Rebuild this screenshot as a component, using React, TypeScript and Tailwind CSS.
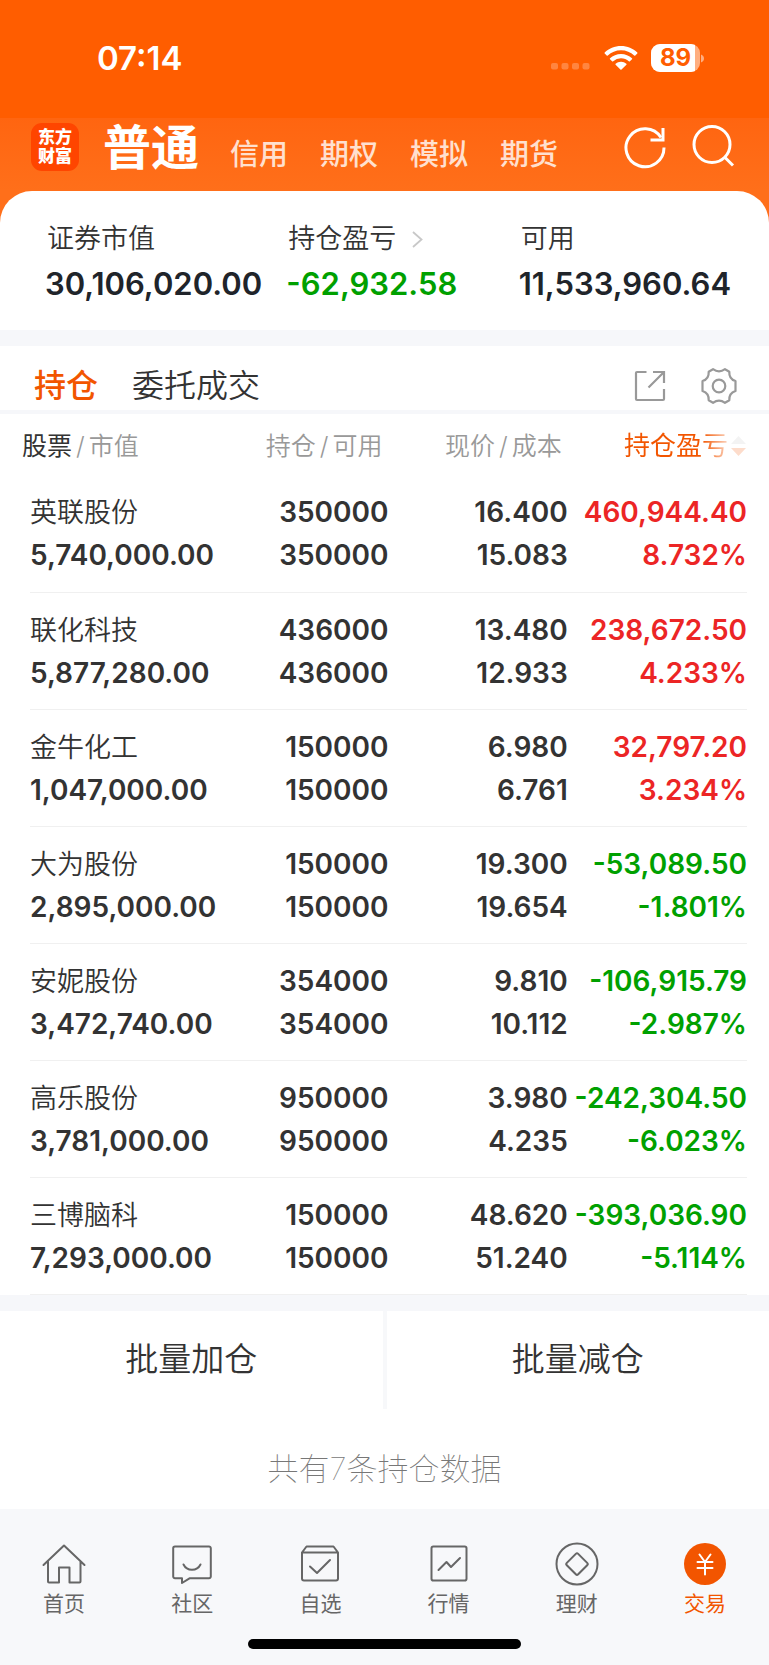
import type { ReactNode } from 'react';

const ACCOUNT_TABS = ['信用', '期权', '模拟', '期货'];

type Holding = {
  name: string;
  value: string;
  qty: string;
  price: string;
  cost: string;
  profit: string;
  rate: string;
};

const HOLDINGS: Holding[] = [
  { name: '英联股份', value: '5,740,000.00', qty: '350000', price: '16.400', cost: '15.083', profit: '460,944.40', rate: '8.732%' },
  { name: '联化科技', value: '5,877,280.00', qty: '436000', price: '13.480', cost: '12.933', profit: '238,672.50', rate: '4.233%' },
  { name: '金牛化工', value: '1,047,000.00', qty: '150000', price: '6.980', cost: '6.761', profit: '32,797.20', rate: '3.234%' },
  { name: '大为股份', value: '2,895,000.00', qty: '150000', price: '19.300', cost: '19.654', profit: '-53,089.50', rate: '-1.801%' },
  { name: '安妮股份', value: '3,472,740.00', qty: '354000', price: '9.810', cost: '10.112', profit: '-106,915.79', rate: '-2.987%' },
  { name: '高乐股份', value: '3,781,000.00', qty: '950000', price: '3.980', cost: '4.235', profit: '-242,304.50', rate: '-6.023%' },
  { name: '三博脑科', value: '7,293,000.00', qty: '150000', price: '48.620', cost: '51.240', profit: '-393,036.90', rate: '-5.114%' },
];

function StatusBar() {
  return (
    <div className="flex h-[118px] items-start justify-between bg-[#ff5d00] pl-[97px] pr-16 pt-9">
      <span className="text-[33px] font-semibold leading-[44px]">07:14</span>
      <div className="flex h-[44px] items-center">
        <svg width="39" height="7" viewBox="0 0 39 7" fill="#fff" fillOpacity="0.25" className="mr-[14px] mt-4">
          <rect x="0" width="7" height="6.5" rx="2" />
          <rect x="10.5" width="7" height="6.5" rx="2" />
          <rect x="21" width="7" height="6.5" rx="2" />
          <rect x="31.5" width="7" height="6.5" rx="2" />
        </svg>
        <svg width="34" height="26" viewBox="0 0 34 26" className="mr-[13px]" fill="#fff">
          <path d="M17 1C10.600 1 4.900 3.500.7 7.500a.8.8 0 0 0 0 1.100l2 2c.3.3.8.3 1.100 0C7.300 7.300 11.900 5.300 17 5.300s9.700 2 13.200 5.300c.3.3.8.3 1.100 0l2-2c.3-.3.3-.8 0-1.100C29.100 3.500 23.400 1 17 1Z" />
          <path d="M17 8.900c-4.300 0-8.100 1.600-11 4.300-.3.3-.3.8 0 1.100l2.100 2c.3.3.8.3 1.100 0A11.300 11.300 0 0 1 17 13.200c3 0 5.700 1.200 7.800 3.100.3.3.8.3 1.100 0l2.100-2c.3-.3.3-.8 0-1.100-2.900-2.700-6.700-4.300-11-4.300Z" />
          <path d="M17 16.800c-2.100 0-4 .7-5.400 2-.3.3-.3.7 0 1l4.800 4.800c.3.3.8.3 1.100 0l4.900-4.800c.3-.3.3-.7 0-1a8 8 0 0 0-5.400-2Z" />
        </svg>
        <div className="relative h-7 w-[49px] overflow-hidden rounded-[9px] bg-white/50">
          <div className="h-7 w-11 bg-white" />
          <span className="absolute inset-0 text-center text-[24px] font-bold leading-7 text-[#ff5d00]">89</span>
        </div>
        <svg width="4" height="9" viewBox="0 0 4 9" className="ml-px">
          <path d="M0 0.500C1.800 1.200 3 2.700 3 4.500S1.800 7.800 0 8.500Z" fill="#fff" fillOpacity="0.5" />
        </svg>
      </div>
    </div>
  );
}

function AccountNav() {
  return (
    <nav className="flex h-[73px] items-start bg-gradient-to-b from-[#ff6510] to-[#ff6f1a] pl-[31px] pr-[34px]">
      <div className="mt-[5px] grid h-12 w-12 shrink-0 place-content-center rounded-[11px] bg-[#ff4500] text-[17px] font-black leading-[19px]">
        <span>东方</span>
        <span>财富</span>
      </div>
      <div className="ml-6 mt-0.5 flex items-baseline gap-8">
        <button className="-mr-px text-[48px] font-bold leading-[56px]">普通</button>
        {ACCOUNT_TABS.map((tab) => (
          <button key={tab} className="text-[29px] font-medium leading-10 text-[#ffe0cf]">
            {tab}
          </button>
        ))}
      </div>
      <div className="ml-auto flex gap-6 pt-[7px]">
        <button aria-label="刷新">
          <svg width="44" height="44" viewBox="0 0 44 44" fill="none" stroke="#fff" strokeWidth="3">
            <path d="M41 22.500A19 19 0 1 1 38 12.500" />
            <path d="M40 3V15H27.500" />
          </svg>
        </button>
        <button aria-label="搜索">
          <svg width="44" height="44" viewBox="0 0 44 44" fill="none" stroke="#fff" strokeWidth="3">
            <circle cx="21" cy="19.500" r="18" />
            <path d="M33.500 32 42 40.500" />
          </svg>
        </button>
      </div>
    </nav>
  );
}

function SummaryItem({ label, value, color, arrow }: { label: string; value: string; color: string; arrow?: boolean }) {
  return (
    <div>
      <div className="flex items-center gap-4 pl-0.5 text-[27px] font-[350] leading-10 text-[#333]">
        {label}
        {arrow && (
          <svg width="11" height="17" viewBox="0 0 11 17" fill="none" stroke="#c8c8c8" strokeWidth="1.8">
            <path d="M1 1l8.500 7.500L1 16" />
          </svg>
        )}
      </div>
      <div className={`mt-1 text-[31px] font-semibold leading-[42px] ${color}`}>{value}</div>
    </div>
  );
}

function PositionTabs() {
  return (
    <div className="flex h-[68px] items-center border-b-4 border-[#f6f7fa] pl-[34px] pr-[31px] pt-4">
      <button className="text-[32px] font-medium leading-[44px] text-[#f25500]">持仓</button>
      <button className="ml-[34px] text-[32px] font-[350] leading-[44px] text-[#333]">委托成交</button>
      <div className="ml-auto flex items-center gap-8">
        <button aria-label="分享">
          <svg width="36" height="36" viewBox="0 0 36 36" fill="none" stroke="#999" strokeWidth="2.2">
            <path d="M14.500 4H5a1 1 0 0 0-1 1v26a1 1 0 0 0 1 1h26a1 1 0 0 0 1-1V21" />
            <path d="M21 4h11v11M31.500 4.500 16.500 19.500" />
          </svg>
        </button>
        <button aria-label="设置">
          <svg width="38" height="38" viewBox="0 0 38 38" fill="none" stroke="#999" strokeWidth="2.200" strokeLinejoin="round">
            <path d="M13 2.200c3.600 2.600 8.400 2.600 12 0l4.300 2.500c-.3 4.700 1.800 7.900 6.200 9.300v10c-4.400 1.400-6.500 4.600-6.200 9.300L25 35.800c-3.600-2.600-8.400-2.600-12 0l-4.300-2.500c.3-4.700-1.800-7.900-6.200-9.300V14c4.400-1.400 6.500-4.600 6.200-9.300Z" />
            <circle cx="19" cy="19" r="6.300" />
          </svg>
        </button>
      </div>
    </div>
  );
}

function HoldingsTable() {
  return (
    <div className="pl-[30px] pr-[22px]">
      <table className="w-full table-fixed text-right">
        <thead className="text-[25px] leading-9 text-[#999]">
          <tr className="h-[61px] align-top">
            <th className="w-1/4 whitespace-nowrap pt-[14px] text-left font-[350]">
              <span className="-ml-2 font-normal text-[#333]">股票</span>
              <span className="mx-1">/</span>市值
            </th>
            <th className="w-1/4 whitespace-nowrap pr-[6px] pt-[14px] font-[350]">
              持仓<span className="mx-1">/</span>可用
            </th>
            <th className="w-1/4 whitespace-nowrap pr-[6px] pt-[14px] font-[350]">
              现价<span className="mx-1">/</span>成本
            </th>
            <th className="w-1/4 whitespace-nowrap pt-[14px] font-normal">
              <button className="inline-flex items-center gap-0.5 text-[26px] font-normal text-[#f25500]">
                <span className="bg-gradient-to-r from-[#f25500] from-75% to-[#f25500]/25 bg-clip-text text-transparent">持仓盈亏</span>
                <svg width="17" height="22" viewBox="0 0 17 22">
                  <path d="M8.500 1 16 9H1Z" fill="#f3f3f3" />
                  <path d="M1 13h15l-7.500 8Z" fill="#fddccb" />
                </svg>
              </button>
            </th>
          </tr>
        </thead>
        <tbody className="text-[28px] font-semibold leading-[43px] text-[#333]">
          {HOLDINGS.map((h) => (
            <tr key={h.name} className="h-[117px] border-b border-[#f0f0f0] align-top">
              <td className="pt-4 text-left">
                <div className="text-[27px] font-[350]">{h.name}</div>
                <div>{h.value}</div>
              </td>
              <td className="pt-4">
                <div>{h.qty}</div>
                <div>{h.qty}</div>
              </td>
              <td className="pt-4">
                <div>{h.price}</div>
                <div>{h.cost}</div>
              </td>
              <td className={`whitespace-nowrap pt-4 ${h.profit.startsWith('-') ? 'text-[#00a000]' : 'text-[#ec2525]'}`}>
                <div>{h.profit}</div>
                <div>{h.rate}</div>
              </td>
            </tr>
          ))}
        </tbody>
      </table>
    </div>
  );
}

function NavItem({ label, active, children }: { label: string; active?: boolean; children: ReactNode }) {
  return (
    <a href="#" className={`flex flex-1 flex-col items-center ${active ? 'text-[#f25500]' : 'text-[#666]'}`}>
      <svg width="44" height="44" viewBox="0 0 44 44" fill="none" stroke="currentColor" strokeWidth="2" strokeLinecap="round" strokeLinejoin="round">
        {children}
      </svg>
      <span className="mt-[3px] text-[21px] leading-[30px]">{label}</span>
    </a>
  );
}

function BottomNav() {
  return (
    <footer className="bg-[#f7f8fa] pb-[17px] pt-[33px]">
      <nav className="flex">
        <NavItem label="首页">
          <path d="M1.500 23 22 3.500 42.500 23M6 19.500V39.500a1 1 0 0 0 1 1H17V25.500H27.500V40.500H37.500a1 1 0 0 0 1-1V19.500" />
        </NavItem>
        <NavItem label="社区">
          <path d="M5 4.500H39a1.800 1.800 0 0 1 1.800 1.800V34.500a1.800 1.800 0 0 1-1.800 1.800H19.500L12 41V36.300H5a1.800 1.800 0 0 1-1.800-1.800V6.300A1.800 1.800 0 0 1 5 4.500Z" />
          <path d="M13.500 22.500c3.500 7 13.500 7 17 0" />
        </NavItem>
        <NavItem label="自选">
          <path d="M4 10.500 8.500 4.500H35.500L40 10.500V36.500a2 2 0 0 1-2 2H6a2 2 0 0 1-2-2ZM4 10.500H40" />
          <path d="M12 24.500 19 31 32 18" />
        </NavItem>
        <NavItem label="行情">
          <rect x="4.500" y="4.500" width="35" height="34" rx="1.800" />
          <path d="M11.500 28 19.500 20 24 25 33 16" />
        </NavItem>
        <NavItem label="理财">
          <circle cx="22" cy="22" r="20.500" />
          <path d="M20.800 11.900a1.700 1.700 0 0 1 2.400 0l9 9a1.700 1.700 0 0 1 0 2.400l-9 9a1.700 1.700 0 0 1-2.400 0l-9-9a1.700 1.700 0 0 1 0-2.400Z" />
        </NavItem>
        <NavItem label="交易" active>
          <circle cx="22" cy="22" r="21" fill="currentColor" stroke="none" />
          <path d="M16.500 12.500 22 20 27.500 12.500M22 20V32.500M14.500 20H29.500M14.500 26H29.500" stroke="#fff" />
        </NavItem>
      </nav>
      <div className="mx-auto mt-5 h-[10px] w-[273px] rounded-full bg-black" />
    </footer>
  );
}

export default function App() {
  return (
    <div className="min-h-screen bg-white font-['Inter','Noto_Sans_CJK_SC',sans-serif]">
      <header className="bg-[#ff6f1a] text-white">
        <StatusBar />
        <AccountNav />
      </header>

      <div className="bg-[#ff6f1a]">
        <section className="grid h-[139px] grid-cols-[241fr_232fr_250fr] rounded-t-[32px] bg-white pl-[45px] pt-7">
          <SummaryItem label="证券市值" value="30,106,020.00" color="text-[#20242a]" />
          <SummaryItem label="持仓盈亏" value="-62,932.58" color="text-[#00a000]" arrow />
          <SummaryItem label="可用" value="11,533,960.64" color="text-[#20242a]" />
        </section>
      </div>

      <main className="border-t-[16px] border-[#f6f7fa]">
        <PositionTabs />
        <HoldingsTable />

        <div className="flex divide-x-4 divide-[#f7f8fa] border-t-[16px] border-[#f6f7fa]">
          <button className="h-[98px] flex-1 text-[33px] font-[350] text-[#333]">批量加仓</button>
          <button className="h-[98px] flex-1 text-[33px] font-[350] text-[#333]">批量减仓</button>
        </div>
        <p className="pb-[18px] pt-[38px] text-center text-[31px] font-thin leading-[44px] text-[#777]">共有7条持仓数据</p>
      </main>

      <BottomNav />
    </div>
  );
}
